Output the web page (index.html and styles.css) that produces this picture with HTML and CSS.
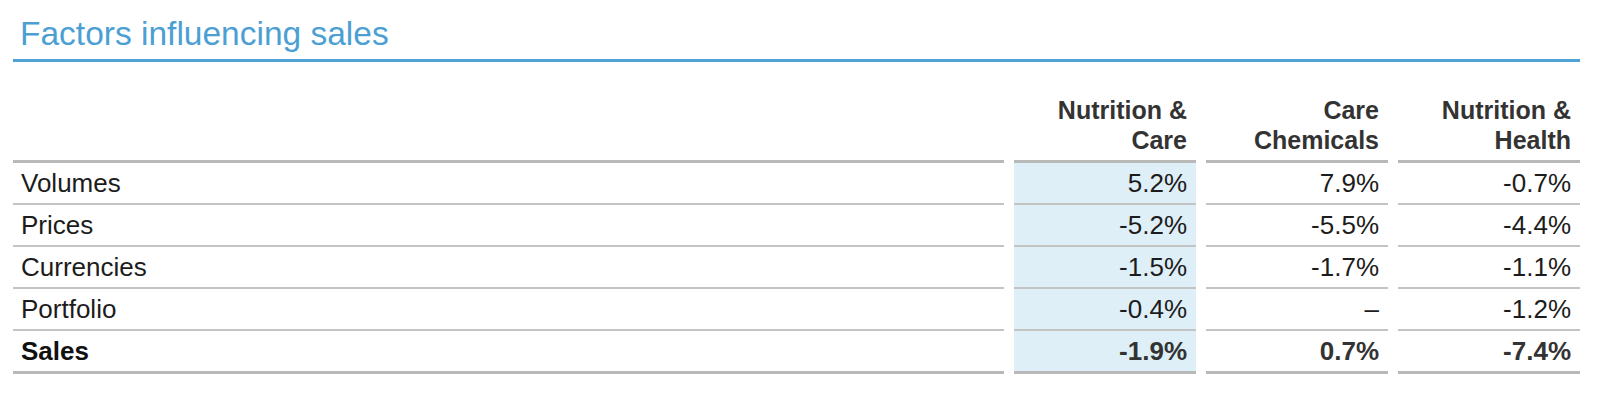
FILE: index.html
```html
<!DOCTYPE html>
<html lang="en">
<head>
<meta charset="utf-8">
<title>Factors influencing sales</title>
<link rel="stylesheet" href="styles.css">
</head>
<body>
<section class="panel">
  <h2 class="title">Factors influencing sales</h2>
  <div class="table">
    <div class="cell head"></div>
    <div class="cell head num">Nutrition &amp;<br>Care</div>
    <div class="cell head num">Care<br>Chemicals</div>
    <div class="cell head num">Nutrition &amp;<br>Health</div>

    <div class="cell label">Volumes</div>
    <div class="cell num hl">5.2%</div>
    <div class="cell num">7.9%</div>
    <div class="cell num">-0.7%</div>

    <div class="cell label">Prices</div>
    <div class="cell num hl">-5.2%</div>
    <div class="cell num">-5.5%</div>
    <div class="cell num">-4.4%</div>

    <div class="cell label">Currencies</div>
    <div class="cell num hl">-1.5%</div>
    <div class="cell num">-1.7%</div>
    <div class="cell num">-1.1%</div>

    <div class="cell label">Portfolio</div>
    <div class="cell num hl">-0.4%</div>
    <div class="cell num">–</div>
    <div class="cell num">-1.2%</div>

    <div class="cell label total">Sales</div>
    <div class="cell num hl total">-1.9%</div>
    <div class="cell num total">0.7%</div>
    <div class="cell num total">-7.4%</div>
  </div>
</section>
</body>
</html>
```

FILE: styles.css
```css
html, body {
  margin: 0;
  padding: 0;
  background: #ffffff;
}

body {
  font-family: "Liberation Sans", Arial, Helvetica, sans-serif;
}

.panel {
  width: 1567px;
  margin-left: 13px;
  padding-top: 14px;
}

.title {
  margin: 0;
  padding: 0 0 5px 7px;
  font-size: 33.5px;
  line-height: 40px;
  font-weight: normal;
  color: #4c9fd3;
  border-bottom: 3px solid #4fa2d3;
}

.table {
  display: grid;
  grid-template-columns: 1fr 182px 182px 182px;
  column-gap: 10px;
  margin-top: 33px;
}

.cell {
  font-size: 26px;
  line-height: 40px;
  color: #1c1c1c;
  border-bottom: 2px solid #c4c4c4;
  white-space: nowrap;
}

.label {
  padding-left: 8px;
}

.num {
  text-align: right;
  padding-right: 9px;
}

.head {
  font-size: 25px;
  font-weight: bold;
  color: #333333;
  line-height: 30px;
  padding-bottom: 5px;
  border-bottom: 3px solid #b9b9b9;
  align-self: end;
}

.hl {
  background: #dfeff7;
}

.total {
  font-weight: bold;
  color: #111111;
  border-bottom: 3px solid #b9b9b9;
}

.num.total {
  color: #333333;
}
```
